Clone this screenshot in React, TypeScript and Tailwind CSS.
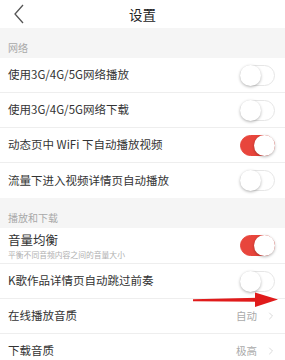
import { ChevronRight } from "lucide-react";

const font = { fontFamily: "'Noto Sans CJK SC', 'Noto Sans', sans-serif" };

function Toggle({ on }: { on: boolean }) {
  return (
    <div
      className={`relative h-[21px] w-[35px] rounded-full border ${
        on ? "border-[#e8453c] bg-[#e8453c]" : "border-[#e6e6e6] bg-white"
      }`}
    >
      <div
        className={`absolute top-[-1px] h-[21px] w-[21px] rounded-full bg-white shadow-[0_1px_3px_rgba(0,0,0,0.3)] ${
          on ? "right-[-1px]" : "left-[-1px]"
        }`}
      />
    </div>
  );
}

function Section({ title }: { title: string }) {
  return (
    <div className="flex h-[30px] items-end bg-[#f5f5f5] pb-[3px] pl-2 text-[10px] text-[#a8a8a8]">
      {title}
    </div>
  );
}

function SwitchRow({ label, on, sub, last }: { label: string; on: boolean; sub?: string; last?: boolean }) {
  return (
    <div
      className={`flex items-center justify-between pl-2 pr-[10px] ${sub ? "h-[36px]" : "h-[35px]"} ${
        last ? "" : "border-b border-[#eeeeee]"
      }`}
    >
      <div className="flex flex-col">
        <span className={`${sub ? "text-[12.5px] leading-[14px]" : "text-[11.5px]"} text-[#333]`}>{label}</span>
        {sub && <span className="mt-[3px] text-[7.8px] leading-[9px] text-[#b0b0b0]">{sub}</span>}
      </div>
      <Toggle on={on} />
    </div>
  );
}

function LinkRow({ label, value }: { label: string; value: string }) {
  return (
    <div className="flex h-[35px] items-center justify-between border-b border-[#eeeeee] pl-2 pr-[8px]">
      <span className="text-[11.5px] text-[#333]">{label}</span>
      <div className="flex items-center gap-[8px]">
        <span className="text-[10.5px] text-[#aaaaaa]">{value}</span>
        <ChevronRight className="h-[12px] w-[12px] text-[#cccccc]" strokeWidth={1.5} />
      </div>
    </div>
  );
}

export default function App() {
  return (
    <div className="relative h-[360px] w-[285px] overflow-hidden bg-white" style={font}>
      <div className="relative flex h-[28px] items-center justify-center bg-white">
        <svg className="absolute left-[12px] top-[3px]" width="14" height="22" viewBox="0 0 14 22">
          <path d="M11 2 L3 11 L11 20" fill="none" stroke="#555" strokeWidth="1.3" />
        </svg>
        <span className="text-[13.5px] text-[#222]">设置</span>
      </div>

      <Section title="网络" />
      <SwitchRow label="使用3G/4G/5G网络播放" on={false} />
      <SwitchRow label="使用3G/4G/5G网络下载" on={false} />
      <SwitchRow label="动态页中 WiFi 下自动播放视频" on={true} />
      <SwitchRow label="流量下进入视频详情页自动播放" on={false} last />

      <Section title="播放和下载" />
      <SwitchRow label="音量均衡" sub="平衡不同音频内容之间的音量大小" on={true} />
      <SwitchRow label="K歌作品详情页自动跳过前奏" on={false} />
      <LinkRow label="在线播放音质" value="自动" />
      <LinkRow label="下载音质" value="极高" />

      <svg className="absolute left-[192px] top-[291px]" width="88" height="18" viewBox="0 0 88 18">
        <path d="M1 8.2 L66 6.8 L66 10.8 L1 10.2 Z" fill="#e01b1b" />
        <path d="M63 1.5 L86 8.5 L63 16 Z" fill="#e01b1b" />
      </svg>
    </div>
  );
}
